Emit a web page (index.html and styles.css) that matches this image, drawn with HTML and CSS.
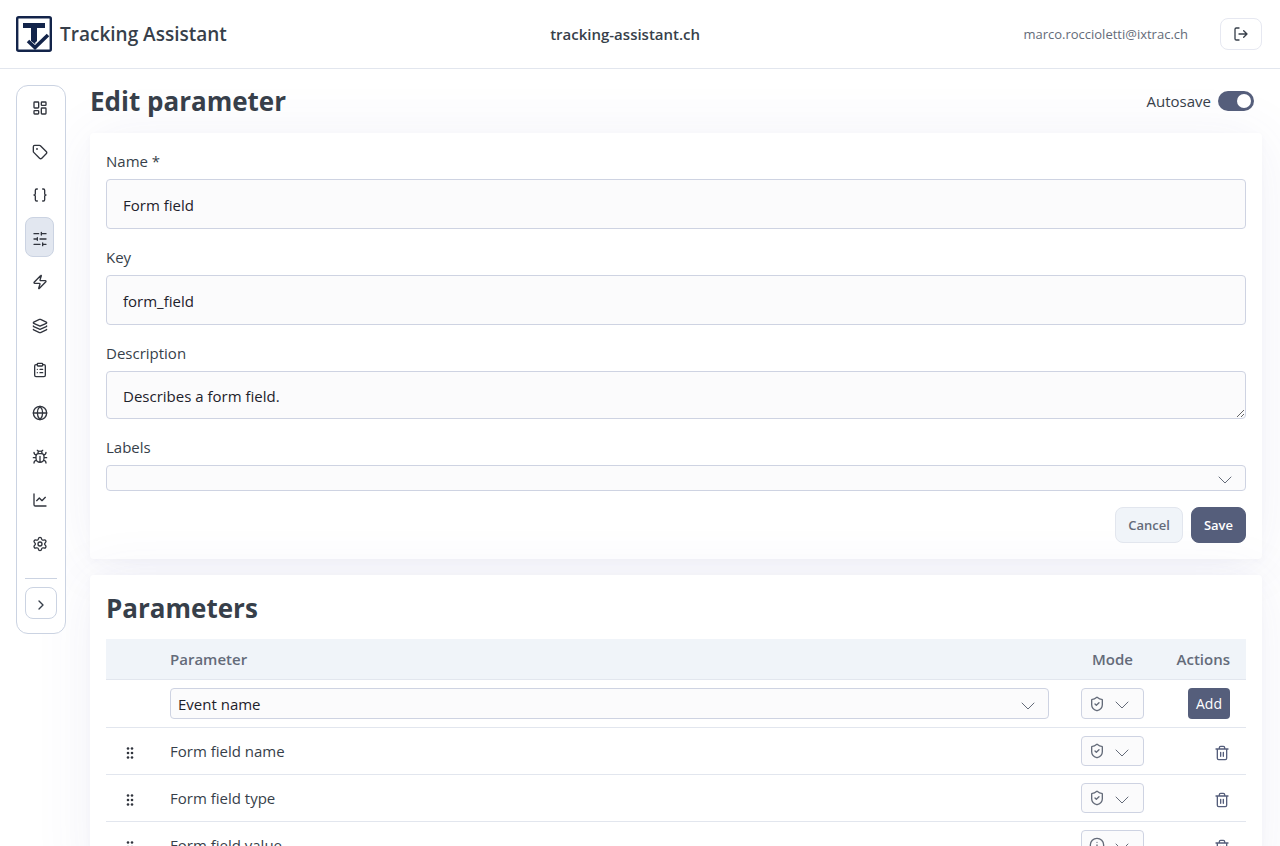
FILE: index.html
```html
<!DOCTYPE html>
<html lang="en">
<head>
<meta charset="utf-8">
<meta name="viewport" content="width=device-width, initial-scale=1">
<title>Tracking Assistant</title>
<link rel="stylesheet" href="styles.css">
</head>
<body>
<svg class="sprite" aria-hidden="true">
  <symbol id="chevron" viewBox="0 0 14 8"><path d="M1 1l6 6 6-6"/></symbol>
  <symbol id="shield" viewBox="0 0 24 24"><path d="M20 13c0 5-3.500 7.500-7.660 8.950a1 1 0 0 1-.67-.01C7.500 20.500 4 18 4 13V6a1 1 0 0 1 1-1c2 0 4.500-1.200 6.240-2.720a1.170 1.170 0 0 1 1.520 0C14.510 3.810 17 5 19 5a1 1 0 0 1 1 1z"/><path d="M9 12l2 2 4-4"/></symbol>
  <symbol id="info" viewBox="0 0 24 24"><circle cx="12" cy="12" r="10"/><path d="M12 8h.01M12 12v4"/></symbol>
  <symbol id="trash" viewBox="0 0 24 24"><path d="M3 6h18M19 6v14a2 2 0 0 1-2 2H7a2 2 0 0 1-2-2V6M8 6V4a2 2 0 0 1 2-2h4a2 2 0 0 1 2 2v2M10 11v6M14 11v6"/></symbol>
  <symbol id="grip" viewBox="0 0 8 14"><circle cx="2" cy="2.500" r="1.300"/><circle cx="6" cy="2.500" r="1.300"/><circle cx="2" cy="7" r="1.300"/><circle cx="6" cy="7" r="1.300"/><circle cx="2" cy="11.500" r="1.300"/><circle cx="6" cy="11.500" r="1.300"/></symbol>
</svg>

<header class="topbar">
  <a class="brand" href="#">
    <svg class="logo" viewBox="0 0 36 36" aria-hidden="true">
      <rect class="logo-frame" x="1.200" y="1.200" width="33.600" height="33.600" rx="1.500"/>
      <path class="logo-fill" d="M7 7h22v5h-8v14l-2 2-4-3V12H7z"/>
      <path class="logo-gap" d="M20 28l11-10.500"/>
      <path class="logo-check" d="M12 25l7 6.500 13-12.500"/>
    </svg>
    <span>Tracking Assistant</span>
  </a>
  <strong class="site">tracking-assistant.ch</strong>
  <div class="account">
    <span class="email">marco.roccioletti@ixtrac.ch</span>
    <button class="logout" type="button" aria-label="Log out">
      <svg class="icon" viewBox="0 0 24 24"><path d="M9 21H5a2 2 0 0 1-2-2V5a2 2 0 0 1 2-2h4M16 17l5-5-5-5M21 12H9"/></svg>
    </button>
  </div>
</header>

<div class="shell">
  <nav class="sidebar" aria-label="Main">
    <div class="nav-list">
      <a class="nav-item" href="#" aria-label="Dashboard"><svg class="icon" viewBox="0 0 24 24"><rect x="3" y="3" width="7" height="9" rx="1"/><rect x="14" y="3" width="7" height="5" rx="1"/><rect x="14" y="12" width="7" height="9" rx="1"/><rect x="3" y="16" width="7" height="5" rx="1"/></svg></a>
      <a class="nav-item" href="#" aria-label="Tags"><svg class="icon" viewBox="0 0 24 24"><circle cx="7.500" cy="7.500" r=".5"/><path d="M12.590 2.590A2 2 0 0 0 11.170 2H4a2 2 0 0 0-2 2v7.170a2 2 0 0 0 .59 1.420l8.700 8.700a2.430 2.430 0 0 0 3.420 0l6.580-6.580a2.430 2.430 0 0 0 0-3.420z"/></svg></a>
      <a class="nav-item" href="#" aria-label="Variables"><svg class="icon" viewBox="0 0 24 24"><path d="M8 3H7a2 2 0 0 0-2 2v5a2 2 0 0 1-2 2 2 2 0 0 1 2 2v5a2 2 0 0 0 2 2h1M16 21h1a2 2 0 0 0 2-2v-5a2 2 0 0 1 2-2 2 2 0 0 1-2-2V5a2 2 0 0 0-2-2h-1"/></svg></a>
      <a class="nav-item active" href="#" aria-label="Parameters" aria-current="page"><svg class="icon" viewBox="0 0 24 24"><path d="M21 4h-7M10 4H3M21 12h-9M8 12H3M21 20h-5M12 20H3M14 2v4M8 10v4M16 18v4"/></svg></a>
      <a class="nav-item" href="#" aria-label="Events"><svg class="icon" viewBox="0 0 24 24"><path d="M4 14a1 1 0 0 1-.78-1.630l9.900-10.200a.5.5 0 0 1 .86.460l-1.920 6.020A1 1 0 0 0 13 10h7a1 1 0 0 1 .78 1.630l-9.900 10.200a.5.5 0 0 1-.86-.460l1.920-6.020A1 1 0 0 0 11 14z"/></svg></a>
      <a class="nav-item" href="#" aria-label="Layers"><svg class="icon" viewBox="0 0 24 24"><path d="M12.830 2.180a2 2 0 0 0-1.660 0L2.600 6.080a1 1 0 0 0 0 1.830l8.580 3.910a2 2 0 0 0 1.660 0l8.580-3.900a1 1 0 0 0 0-1.830zM2 12a1 1 0 0 0 .58.910l8.600 3.910a2 2 0 0 0 1.650 0l8.580-3.900A1 1 0 0 0 22 12M2 17a1 1 0 0 0 .58.910l8.600 3.910a2 2 0 0 0 1.650 0l8.580-3.900A1 1 0 0 0 22 17"/></svg></a>
      <a class="nav-item" href="#" aria-label="Plans"><svg class="icon" viewBox="0 0 24 24"><rect x="8" y="2" width="8" height="4" rx="1"/><path d="M16 4h2a2 2 0 0 1 2 2v14a2 2 0 0 1-2 2H6a2 2 0 0 1-2-2V6a2 2 0 0 1 2-2h2M12 11h4M12 16h4M8 11h.01M8 16h.01"/></svg></a>
      <a class="nav-item" href="#" aria-label="Websites"><svg class="icon" viewBox="0 0 24 24"><circle cx="12" cy="12" r="10"/><path d="M12 2a14.500 14.500 0 0 0 0 20 14.500 14.500 0 0 0 0-20M2 12h20"/></svg></a>
      <a class="nav-item" href="#" aria-label="Debugger"><svg class="icon" viewBox="0 0 24 24"><path d="M8 2l1.880 1.880M14.120 3.880L16 2M9 7.130v-1a3 3 0 1 1 6 0v1M12 20a6 6 0 0 1-6-6v-3a4 4 0 0 1 4-4h4a4 4 0 0 1 4 4v3a6 6 0 0 1-6 6M12 20v-9M6.530 9C4.600 8.800 3 7.100 3 5M6 13H2M3 21c0-2.100 1.700-3.900 3.800-4M21 5c0 2.100-1.600 3.800-3.500 4M22 13h-4M17.200 17c2.100.1 3.800 1.900 3.800 4"/></svg></a>
      <a class="nav-item" href="#" aria-label="Reports"><svg class="icon" viewBox="0 0 24 24"><path d="M3 3v16a2 2 0 0 0 2 2h16M7 13l4-4 4 4 5-5"/></svg></a>
      <a class="nav-item" href="#" aria-label="Settings"><svg class="icon" viewBox="0 0 24 24"><path d="M9.670 4.140a2.340 2.340 0 0 1 4.660 0 2.340 2.340 0 0 0 3.320 1.910 2.340 2.340 0 0 1 2.330 4.030 2.340 2.340 0 0 0 0 3.840 2.340 2.340 0 0 1-2.330 4.030 2.340 2.340 0 0 0-3.320 1.910 2.340 2.340 0 0 1-4.660 0 2.340 2.340 0 0 0-3.320-1.910 2.340 2.340 0 0 1-2.330-4.030 2.340 2.340 0 0 0 0-3.840 2.340 2.340 0 0 1 2.330-4.030 2.340 2.340 0 0 0 3.320-1.910"/><circle cx="12" cy="12" r="3"/></svg></a>
    </div>
    <button class="expand" type="button" aria-label="Expand menu"><svg class="icon" viewBox="0 0 24 24"><path d="M9 6l6 6-6 6"/></svg></button>
  </nav>

  <main class="main">
    <div class="page-head">
      <h1>Edit parameter</h1>
      <label class="autosave">Autosave <input class="switch" type="checkbox" role="switch" checked></label>
    </div>

    <form class="card form">
      <div class="field">
        <label for="name">Name *</label>
        <input id="name" class="control" type="text" value="Form field">
      </div>
      <div class="field">
        <label for="key">Key</label>
        <input id="key" class="control" type="text" value="form_field">
      </div>
      <div class="field">
        <label for="description">Description</label>
        <textarea id="description" class="control area" rows="1">Describes a form field.</textarea>
      </div>
      <div class="field">
        <label for="labels">Labels</label>
        <div class="select-wrap">
          <select id="labels" class="control slim"><option></option></select>
          <svg class="chevron"><use href="#chevron"/></svg>
        </div>
      </div>
      <div class="actions">
        <button class="btn" type="button">Cancel</button>
        <button class="btn primary" type="submit">Save</button>
      </div>
    </form>

    <section class="card">
      <h2>Parameters</h2>
      <table class="params">
        <thead>
          <tr><th class="col-grip"></th><th class="col-name">Parameter</th><th class="col-mode">Mode</th><th class="col-actions">Actions</th></tr>
        </thead>
        <tbody>
          <tr class="add-row">
            <td></td>
            <td>
              <div class="select-wrap">
                <select class="control compact" aria-label="Parameter"><option>Event name</option></select>
                <svg class="chevron"><use href="#chevron"/></svg>
              </div>
            </td>
            <td><button class="mode" type="button" aria-haspopup="listbox" aria-label="Mode"><svg class="icon"><use href="#shield"/></svg><svg class="mode-chevron"><use href="#chevron"/></svg></button></td>
            <td class="end"><button class="add" type="button">Add</button></td>
          </tr>
          <tr>
            <td><svg class="grip"><use href="#grip"/></svg></td>
            <td>Form field name</td>
            <td><button class="mode" type="button" aria-haspopup="listbox" aria-label="Mode"><svg class="icon"><use href="#shield"/></svg><svg class="mode-chevron"><use href="#chevron"/></svg></button></td>
            <td class="end"><button class="delete" type="button" aria-label="Delete"><svg class="icon"><use href="#trash"/></svg></button></td>
          </tr>
          <tr>
            <td><svg class="grip"><use href="#grip"/></svg></td>
            <td>Form field type</td>
            <td><button class="mode" type="button" aria-haspopup="listbox" aria-label="Mode"><svg class="icon"><use href="#shield"/></svg><svg class="mode-chevron"><use href="#chevron"/></svg></button></td>
            <td class="end"><button class="delete" type="button" aria-label="Delete"><svg class="icon"><use href="#trash"/></svg></button></td>
          </tr>
          <tr>
            <td><svg class="grip"><use href="#grip"/></svg></td>
            <td>Form field value</td>
            <td><button class="mode" type="button" aria-haspopup="listbox" aria-label="Mode"><svg class="icon"><use href="#info"/></svg><svg class="mode-chevron"><use href="#chevron"/></svg></button></td>
            <td class="end"><button class="delete" type="button" aria-label="Delete"><svg class="icon"><use href="#trash"/></svg></button></td>
          </tr>
        </tbody>
      </table>
    </section>
  </main>
</div>
</body>
</html>
```
FILE: styles.css
```css
* { box-sizing: border-box; }

:root {
  --ink: #373f4a;
  --muted: #646b79;
  --line: #e2e6ee;
  --field-line: #ced3e2;
  --field: #fbfbfc;
  --primary: #555e7b;
  --soft: #f0f4f9;
}

html {
  height: 100%;
  overflow: hidden;
}

body {
  height: 100%;
  margin: 0;
  overflow: hidden;
  background: #fff;
  color: var(--ink);
  font: 15px/24px "Open Sans", "Noto Sans", sans-serif;
}

button, input, select, textarea { font: inherit; color: inherit; margin: 0; }
button { padding: 0; cursor: pointer; }
svg { display: block; fill: none; stroke: currentColor; stroke-linecap: round; stroke-linejoin: round; }
.sprite { display: none; }
.icon { width: 16px; height: 16px; stroke-width: 2; }

.topbar {
  position: relative;
  display: flex;
  align-items: center;
  justify-content: space-between;
  height: 69px;
  padding: 0 18px 0 16px;
  border-bottom: 1px solid var(--line);
  background: #fff;
  z-index: 1;
}
.brand {
  display: flex;
  align-items: center;
  gap: 8px;
  color: var(--ink);
  font-size: 19px;
  font-weight: 600;
  text-decoration: none;
}
.logo { width: 36px; height: 36px; stroke: #13244a; stroke-linecap: butt; stroke-linejoin: miter; }
.logo-frame { stroke-width: 2.4; }
.logo-fill { fill: #13244a; stroke: none; }
.logo-gap { stroke: #fff; stroke-width: 3; }
.logo-check { stroke-width: 3.6; }
.site { font-size: 15px; font-weight: 600; }
.account { display: flex; align-items: center; justify-content: flex-end; gap: 32px; }
.email { color: var(--muted); font-size: 13px; }
.logout {
  display: grid;
  place-items: center;
  width: 42px;
  height: 32px;
  border: 1px solid #e6e8f1;
  border-radius: 8px;
  background: #fff;
}

.shell {
  display: flex;
  align-items: flex-start;
  gap: 24px;
  padding: 16px 18px 16px 16px;
}

.sidebar {
  position: relative;
  flex: none;
  width: 50px;
  padding: 0 8px 14px;
  border: 1px solid #cbd3e2;
  border-radius: 12px;
  background: #fff;
  z-index: 1;
}
.nav-list {
  display: flex;
  flex-direction: column;
  justify-content: space-between;
  height: 493px;
  padding-bottom: 16px;
  border-bottom: 1px solid #cbd3e2;
}
.nav-item {
  display: grid;
  place-items: center;
  width: 29px;
  height: 40px;
  padding-top: 4px;
  border: 1px solid transparent;
  border-radius: 8px;
  color: #30343d;
}
.nav-item.active { border-color: #cbd3e2; background: #e2e7f0; }
.expand {
  display: grid;
  place-items: center;
  width: 32px;
  height: 32px;
  margin-top: 8px;
  padding-top: 3px;
  border: 1px solid #cbd3e2;
  border-radius: 8px;
  background: #fff;
}

.main { flex: 1; min-width: 0; }
.page-head {
  display: flex;
  align-items: center;
  justify-content: space-between;
  height: 32px;
  margin-bottom: 16px;
  padding-right: 8px;
}
h1, h2 { margin: 0; font-size: 26px; line-height: 34px; font-weight: 700; }
.autosave { display: flex; align-items: center; gap: 7px; }
.switch {
  appearance: none;
  display: flex;
  align-items: center;
  justify-content: flex-end;
  width: 36px;
  height: 20px;
  padding: 3px;
  border-radius: 10px;
  background: var(--primary);
}
.switch::before { content: ""; width: 14px; height: 14px; border-radius: 50%; background: #fff; }
.switch:not(:checked) { justify-content: flex-start; background: #b6bccb; }

.card {
  margin-bottom: 16px;
  padding: 16px;
  border-radius: 4px;
  background: #fff;
  box-shadow: 0 2px 6px rgba(80, 80, 140, .03), 0 4px 60px rgba(80, 80, 160, .08);
}
.form { display: grid; gap: 16px; }
.field { display: grid; gap: 6px; }
.control {
  display: block;
  width: 100%;
  height: 50px;
  padding: 2px 16px 0;
  border: 1px solid var(--field-line);
  border-radius: 4px;
  background: var(--field);
  color: #1e222b;
  appearance: none;
}
.area { height: 48px; padding: 12px 16px; line-height: 24px; resize: vertical; overflow: hidden; }
.slim { height: 26px; }
.compact { height: 31px; padding: 0 7px; }
.select-wrap { position: relative; }
.chevron {
  position: absolute;
  right: 14px;
  top: 50%;
  width: 14px;
  height: 8px;
  color: var(--muted);
  pointer-events: none;
  margin-top: -2px;
}
.actions { display: flex; justify-content: flex-end; gap: 8px; }
.btn {
  height: 36px;
  padding: 0 12px;
  border: 1px solid #e2e6ee;
  border-radius: 8px;
  background: var(--soft);
  color: var(--muted);
  font-size: 13px;
  font-weight: 600;
}
.btn.primary { border-color: var(--primary); background: var(--primary); color: #fff; }

.params { width: 100%; margin-top: 14px; border-collapse: separate; border-spacing: 0; table-layout: fixed; }
.params th, .params td { padding: 8px 16px; border-bottom: 1px solid var(--line); text-align: left; vertical-align: middle; }
.params th { background: var(--soft); color: var(--muted); font-weight: 600; }
.col-grip { width: 48px; }
.col-mode { width: 95px; }
.params .col-mode { text-align: center; }
.col-actions { width: 86px; }
.params .col-actions { padding-left: 0; text-align: right; }
.params .end { text-align: right; }
.mode {
  display: flex;
  align-items: center;
  gap: 10px;
  width: 63px;
  height: 30px;
  padding: 0 7px;
  border: 1px solid var(--field-line);
  border-radius: 4px;
  background: var(--field);
  color: var(--muted);
}
.add-row .mode { height: 31px; }
.mode-chevron { width: 14px; height: 8px; margin-top: 3px; }
.add {
  display: block;
  height: 31px;
  margin-left: auto;
  padding: 0 8px;
  border: 0;
  border-radius: 4px;
  background: var(--primary);
  color: #fff;
  font-size: 14px;
}
.delete {
  display: block;
  margin-left: auto;
  padding-top: 4px;
  border: 0;
  background: none;
  color: var(--primary);
}
.grip { width: 8px; height: 18px; margin-left: 4px; padding-top: 4px; fill: #30343d; stroke: none; }
```
